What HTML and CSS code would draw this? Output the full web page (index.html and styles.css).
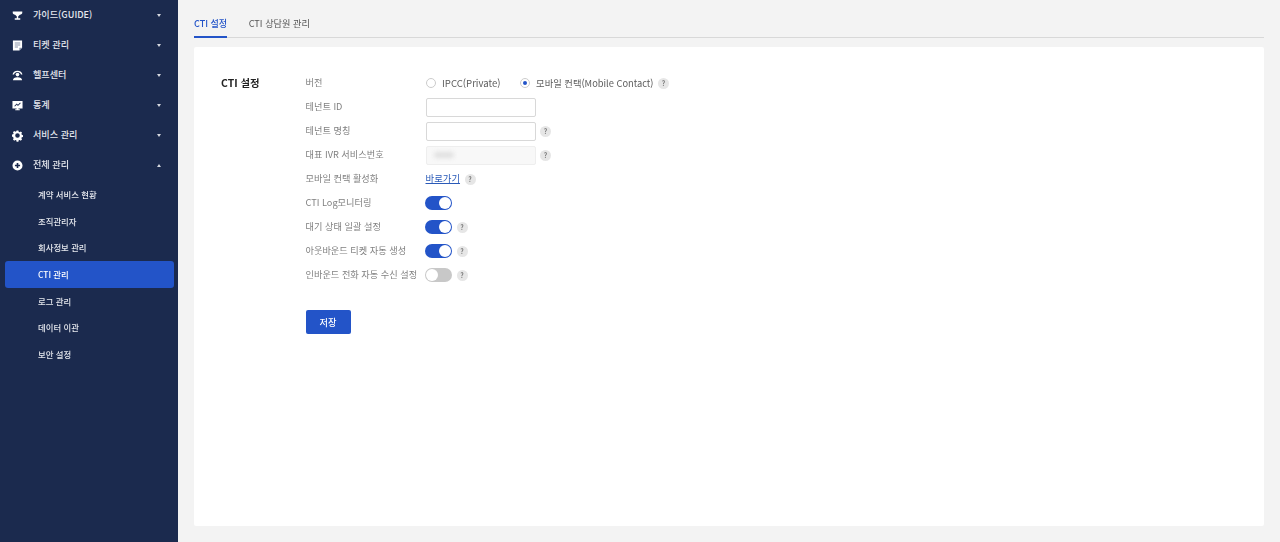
FILE: index.html
```html
<!DOCTYPE html>
<html lang="ko">
<head>
<meta charset="utf-8">
<title>CTI 설정</title>
<link rel="stylesheet" href="styles.css">
</head>
<body>
<div class="app">
  <aside class="sidebar">
    <ul class="menu">
      <li class="menu-item">
        <svg class="menu-icon" viewBox="0 0 12 12"><path d="M.8 1.500h10.400v1.600c0 1.200-1 2-2.600 2.200C8.100 6 7.400 6.500 6.800 6.700V9H9v1.500H3V9h2.200V6.700C4.600 6.500 3.900 6 3.400 5.300 1.800 5.100.8 4.300.8 3.100z"/></svg>
        <span class="menu-label">가이드(GUIDE)</span><span class="caret down"></span>
      </li>
      <li class="menu-item">
        <svg class="menu-icon" viewBox="0 0 12 12"><path d="M1 .6h10v7.800l-3 3H1z"/><path class="icon-line" d="M3 2.800h6v1H3zM3 5h6v1H3zM3 7.200h3.500v1H3zM8 11.400V8.400h3z"/></svg>
        <span class="menu-label">티켓 관리</span><span class="caret down"></span>
      </li>
      <li class="menu-item">
        <svg class="menu-icon" viewBox="0 0 12 12"><path d="M6 .8C3 .8 1 2.500.6 5h1.600C2.600 3.300 4 2.300 6 2.300S9.400 3.300 9.800 5h1.600C11 2.500 9 .8 6 .8z"/><circle cx="6" cy="5" r="2"/><path d="M1 11.200c0-2 2-3.400 5-3.400s5 1.400 5 3.400z"/></svg>
        <span class="menu-label">헬프센터</span><span class="caret down"></span>
      </li>
      <li class="menu-item">
        <svg class="menu-icon" viewBox="0 0 12 12"><path fill-rule="evenodd" d="M.5 1.200h11v8H7v1h1.500v1h-5v-1H5v-1H.5zM2.500 6.500l.7.7 2-2 1.300 1.300 3-3-.7-.7L6.500 5.100 5.200 3.800z"/></svg>
        <span class="menu-label">통계</span><span class="caret down"></span>
      </li>
      <li class="menu-item">
        <svg class="menu-icon" viewBox="0 0 12 12"><path fill-rule="evenodd" d="M5 .5h2l.3 1.400 1.100.5 1.200-.8 1.400 1.400-.8 1.200.5 1.100 1.300.3v2l-1.300.3-.5 1.100.8 1.200-1.400 1.400-1.200-.8-1.100.5-.3 1.400H5l-.3-1.400-1.100-.5-1.200.8-1.400-1.400.8-1.200-.5-1.100L0 7V5l1.300-.3.500-1.100-.8-1.200 1.400-1.400 1.200.8 1.100-.5zM6 3.500a2.500 2.500 0 1 0 0 5 2.500 2.500 0 0 0 0-5z"/></svg>
        <span class="menu-label">서비스 관리</span><span class="caret down"></span>
      </li>
      <li class="menu-item">
        <svg class="menu-icon" viewBox="0 0 12 12"><path fill-rule="evenodd" d="M6 .5a5.500 5.500 0 1 1 0 11 5.500 5.500 0 0 1 0-11zM5.100 3.200v1.900H3.200v1.800h1.900v1.900h1.800V6.900h1.900V5.100H6.900V3.200z"/></svg>
        <span class="menu-label">전체 관리</span><span class="caret up"></span>
      </li>
    </ul>
    <ul class="submenu">
      <li class="sub-item">계약 서비스 현황</li>
      <li class="sub-item">조직관리자</li>
      <li class="sub-item">회사정보 관리</li>
      <li class="sub-item active">CTI 관리</li>
      <li class="sub-item">로그 관리</li>
      <li class="sub-item">데이터 이관</li>
      <li class="sub-item">보안 설정</li>
    </ul>
  </aside>
  <main class="main">
    <nav class="tabs">
      <a class="tab active">CTI 설정</a>
      <a class="tab">CTI 상담원 관리</a>
    </nav>
    <section class="card">
      <h2 class="card-title">CTI 설정</h2>
      <div class="form">
        <div class="row">
          <span class="label">버전</span>
          <div class="control">
            <span class="radio"></span><span class="radio-text first">IPCC(Private)</span>
            <span class="radio checked"></span><span class="radio-text">모바일 컨택(Mobile Contact)</span>
            <span class="help">?</span>
          </div>
        </div>
        <div class="row">
          <span class="label">테넌트 ID</span>
          <div class="control"><span class="input"></span></div>
        </div>
        <div class="row">
          <span class="label">테넌트 명칭</span>
          <div class="control"><span class="input"></span><span class="help">?</span></div>
        </div>
        <div class="row">
          <span class="label">대표 IVR 서비스번호</span>
          <div class="control"><span class="input disabled"><span class="blur"></span></span><span class="help">?</span></div>
        </div>
        <div class="row">
          <span class="label">모바일 컨택 활성화</span>
          <div class="control"><a class="link">바로가기</a><span class="help">?</span></div>
        </div>
        <div class="row">
          <span class="label">CTI Log모니터링</span>
          <div class="control"><span class="switch on"></span></div>
        </div>
        <div class="row">
          <span class="label">대기 상태 일괄 설정</span>
          <div class="control"><span class="switch on"></span><span class="help">?</span></div>
        </div>
        <div class="row">
          <span class="label">아웃바운드 티켓 자동 생성</span>
          <div class="control"><span class="switch on"></span><span class="help">?</span></div>
        </div>
        <div class="row">
          <span class="label">인바운드 전화 자동 수신 설정</span>
          <div class="control"><span class="switch"></span><span class="help">?</span></div>
        </div>
        <button class="save" type="button">저장</button>
      </div>
    </section>
  </main>
</div>
</body>
</html>
```
FILE: styles.css
```css
* { box-sizing: border-box; }
html, body { margin: 0; padding: 0; height: 100%; overflow: hidden; }
body {
  font-family: "Noto Sans CJK KR", "Noto Sans", sans-serif;
  font-size: 9.2px;
  color: #666;
  background: #f3f3f3;
}
.app { display: flex; height: 542px; filter: blur(.3px); }
.sidebar { width: 178px; flex: none; background: #1b2a4e; color: #e6e8ee; }
ul { list-style: none; margin: 0; padding: 0; }
.menu-item { height: 30px; display: flex; align-items: center; padding-left: 11.5px; }
.menu-icon { width: 11px; height: 11px; fill: #fff; flex: none; overflow: visible; }
.icon-line { fill: #8c95aa; }
.menu-label { margin-left: 10.5px; flex: 1; font-weight: 500; font-size: 9.1px; padding-bottom: 2px; }
.caret { width: 0; height: 0; margin-right: 17px; border-left: 2.5px solid transparent; border-right: 2.5px solid transparent; }
.caret.down { border-top: 3px solid #d5d8e0; }
.caret.up { border-bottom: 3px solid #d5d8e0; }
.submenu { padding: 1px 4px 0 5px; }
.sub-item { height: 26.7px; line-height: 26.7px; padding-left: 33px; font-size: 8.4px; font-weight: 500; border-radius: 3px; }
.sub-item.active { background: #2354c8; color: #fff; }
.main { flex: 1; padding: 10px 16px 16px; display: flex; flex-direction: column; }
.tabs { display: flex; gap: 21.5px; height: 28px; border-bottom: 1px solid #d8d8d8; flex: none; }
.tab { height: 28px; line-height: 27px; font-size: 9.2px; color: #555; }
.tab.active { color: #2354c8; font-size: 9.05px; font-weight: 500; border-bottom: 2px solid #2354c8; }
.card { margin-top: 9px; flex: 1; background: #fff; border-radius: 2px; display: flex; padding: 24px 0 0 27px; }
.card-title { width: 84.5px; margin: 2px 0 0; font-size: 10.4px; font-weight: 700; color: #222; line-height: 20px; }
.form { display: flex; flex-direction: column; align-items: flex-start; }
.row { height: 24px; display: flex; align-items: center; }
.label { width: 120px; font-size: 9.2px; color: #808080; white-space: nowrap; padding-bottom: 2px; }
.control { display: flex; align-items: center; color: #555; }
.radio { width: 10px; height: 10px; border: 1px solid #ccc; border-radius: 50%; background: #fff; display: flex; align-items: center; justify-content: center; }
.radio.checked::after { content: ""; width: 4px; height: 4px; border-radius: 50%; background: #2354c8; }
.radio-text { margin-left: 6.5px; font-size: 9.3px; color: #5c5c5c; padding-bottom: 1px; }
.radio-text.first { font-size: 9.6px; margin-right: 19px; }
.help { width: 11px; height: 11px; margin-left: 4.5px; border-radius: 50%; background: #e6e6e6; color: #707070; font-size: 7px; font-weight: 500; line-height: 11px; text-align: center; }
.input { display: block; width: 110px; height: 19px; border: 1px solid #d8d8d8; border-radius: 2px; background: #fff; padding: 5px 7px; }
.input.disabled { background: #f8f8f8; border-color: #eeeeee; }
.blur { display: block; width: 20px; height: 6px; background: #e0e0e0; border-radius: 3px; filter: blur(2px); }
.link { color: #2a5ab8; text-decoration: underline; font-size: 9.4px; padding-bottom: 2px; }
.switch { position: relative; display: block; width: 27px; height: 14px; margin-left: -.5px; border-radius: 7px; background: #c8c8c8; }
.switch::after { content: ""; position: absolute; left: 1px; top: 1px; width: 12px; height: 12px; border-radius: 50%; background: #fff; }
.switch.on { background: #2354c8; }
.switch.on::after { left: 14px; }
.save { margin-top: 22.5px; width: 45px; height: 24px; padding: 0; border: 0; border-radius: 2px; background: #2354c8; color: #fff; font-family: inherit; font-size: 9.2px; font-weight: 500; }
```
